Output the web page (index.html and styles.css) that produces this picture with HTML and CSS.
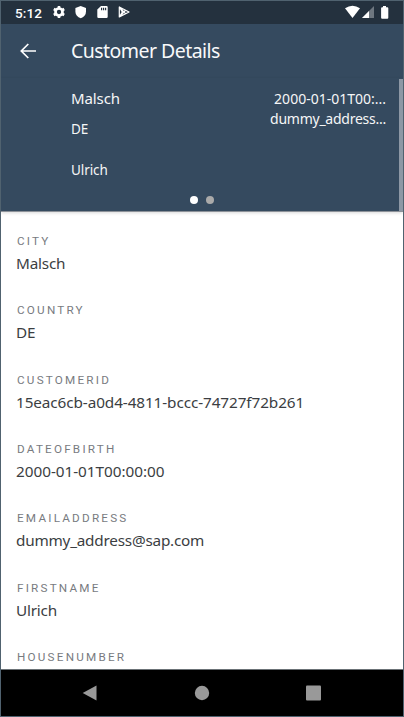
FILE: index.html
```html
<!DOCTYPE html>
<html lang="en">
<head>
<meta charset="utf-8">
<title>Customer Details</title>
<link rel="stylesheet" href="styles.css">
</head>
<body>
<div class="phone">
  <div class="status">
    <span class="time">5:12</span>
    <svg class="notifications" width="78" height="16" viewBox="0 0 78 16" fill="#fff">
      <g><circle cx="6" cy="8" r="3.500" fill="none" stroke="#fff" stroke-width="2.700"/><path d="M4.700 2h2.600v2H4.700zM4.700 12h2.600v2H4.700z"/><path d="M4.700 2h2.600v2H4.700zM4.700 12h2.600v2H4.700z" transform="rotate(60 6 8)"/><path d="M4.700 2h2.600v2H4.700zM4.700 12h2.600v2H4.700z" transform="rotate(-60 6 8)"/></g>
      <path d="M27.700 2l5.300 2v3.700c0 3-2.200 5.400-5.300 6.500-3.100-1.100-5.300-3.500-5.300-6.500V4z"/>
      <path fill-rule="evenodd" d="M48 2h5.500q1.200 0 1.200 1.200v9.600q0 1.200-1.200 1.200h-8q-1.200 0-1.200-1.200V5.600zM48 3.800v2.400h1.200V3.800zm2 0v2.400h1.200V3.800zm2 0v2.400h1.200V3.800z"/>
      <path d="M66.300 3v10l3-5zM66.300 3L76 8l-9.700 5M66.300 3l6.500 7M66.300 13l6.500-7" fill="none" stroke="#fff" stroke-width="1.200" stroke-linejoin="round"/>
    </svg>
    <svg class="signals" width="45" height="16" viewBox="0 0 45 16" fill="#fff">
      <path d="M0 4.300Q7.500-.700 15 4.300L7.500 14z"/>
      <path d="M29 2v12H17z" fill="#6e7780"/><path d="M24 7v7h-7z"/>
      <path d="M38 2h3v1.200h1.300q1 0 1 1v9.600q0 1-1 1h-5.200q-1 0-1-1V4.200q0-1 1-1H38z"/>
    </svg>
  </div>
  <header class="bar">
    <svg width="16" height="16" viewBox="0 0 16 16" fill="none" stroke="#fff" stroke-width="1.700"><path d="M16 8H1.500M8.300 1L1.300 8l7 7"/></svg>
    <h1>Customer Details</h1>
  </header>
  <section class="summary">
    <div class="left">
      <div class="headline">Malsch</div>
      <div class="sub">DE</div>
      <div class="body">Ulrich</div>
    </div>
    <div class="right">
      <div class="date">2000-01-01T00:...</div>
      <div class="mail">dummy_address...</div>
    </div>
    <div class="dots"><i class="dot on"></i><i class="dot"></i></div>
    <div class="scroll"></div>
  </section>
  <main class="fields">
    <dl><dt>CITY</dt><dd>Malsch</dd></dl>
    <dl><dt>COUNTRY</dt><dd>DE</dd></dl>
    <dl><dt>CUSTOMERID</dt><dd class="id">15eac6cb-a0d4-4811-bccc-74727f72b261</dd></dl>
    <dl><dt>DATEOFBIRTH</dt><dd class="birth">2000-01-01T00:00:00</dd></dl>
    <dl><dt>EMAILADDRESS</dt><dd class="email">dummy_address@sap.com</dd></dl>
    <dl><dt>FIRSTNAME</dt><dd>Ulrich</dd></dl>
    <dl><dt>HOUSENUMBER</dt></dl>
  </main>
  <nav class="nav">
    <svg width="241" height="16" viewBox="0 0 241 16" fill="#999"><path d="M14.500.500v15L.700 8z"/><circle cx="120" cy="8" r="7.200"/><rect x="224" y=".500" width="15" height="15" rx="1"/></svg>
  </nav>
</div>
</body>
</html>
```

FILE: styles.css
```css
* { box-sizing: border-box; }
body { margin: 0; font-family: "Noto Sans", Roboto, sans-serif; }
.phone {
  width: 404px; height: 717px; overflow: hidden;
  display: flex; flex-direction: column;
  border: 1px solid #50626f; background: #fff;
}
.status {
  height: 23px; flex: none; display: flex; align-items: center;
  padding: 0 13px 0 14px; background: #24313e; color: #fff;
}
.time { width: 38px; font: 500 13.500px/23px Roboto, sans-serif; letter-spacing: .100px; padding-top: 1px; }
.notifications { margin-top: -1px; }
.signals { margin: -2px 0 0 auto; }
.bar {
  height: 54px; flex: none; display: flex; align-items: center;
  padding-left: 19px; background: #354a5f; color: #f8f9fa;
}
h1 { margin: 0 0 0 35px; font-size: 19.500px; font-weight: 400; line-height: 26px; letter-spacing: -.540px; }
.summary {
  position: relative; height: 134px; flex: none; display: flex;
  justify-content: space-between; padding: 10px 17px 0 70px;
  background: #354a5f; color: #f5f6f7; border-bottom: 1px solid #8d9299;
  box-shadow: 0 1px 3px rgba(0,0,0,.15);
}
.headline { font-size: 15px; line-height: 20px; letter-spacing: -.100px; }
.sub { margin-top: 11px; font-size: 13.500px; line-height: 20px; }
.body { margin-top: 21px; font-size: 13.500px; line-height: 20px; letter-spacing: -.100px; }
.right { padding-top: 1px; text-align: right; font-size: 14px; line-height: 19.500px; white-space: nowrap; }
.mail { letter-spacing: -.250px; }
.dots { position: absolute; left: 189px; bottom: 7px; display: flex; gap: 8px; }
.dot { width: 8px; height: 8px; border-radius: 50%; background: #aaa; }
.dot.on { background: #fff; }
.scroll { position: absolute; right: 0; top: 1px; bottom: 0; width: 4px; background: #8d98a5; }
.fields { flex: 1; overflow: hidden; padding: 20px 15px 0; }
dl { height: 69.350px; margin: 0; }
dt { padding-left: 1px; font: 400 11.700px/18px Roboto, sans-serif; letter-spacing: 2.220px; color: #787b7f; }
dd { margin: 2px 0 0; font-size: 15.300px; line-height: 22px; letter-spacing: -.200px; color: #3b3e42; }
.id { letter-spacing: -.090px; }
.birth { letter-spacing: -.030px; }
.email { letter-spacing: -.220px; }
.nav {
  height: 47px; flex: none; display: flex; align-items: center; justify-content: center;
  background: #000; border-top: 1px solid #6b7276;
}
```
